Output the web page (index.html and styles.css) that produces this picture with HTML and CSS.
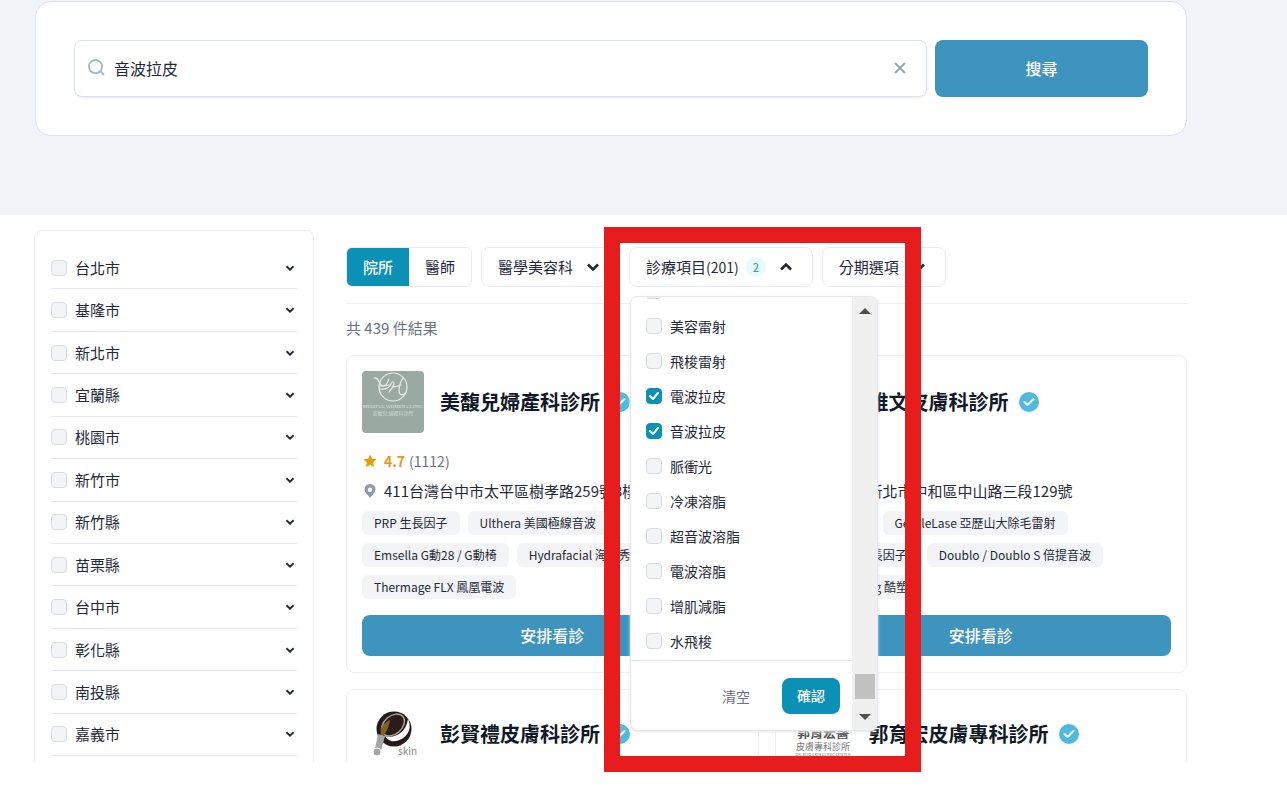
FILE: index.html
```html
<!DOCTYPE html>
<html lang="zh-Hant">
<head>
<meta charset="utf-8">
<meta name="viewport" content="width=device-width, initial-scale=1">
<title>音波拉皮 - 院所搜尋</title>
<link rel="stylesheet" href="styles.css">
</head>
<body>
<svg class="sprite" aria-hidden="true">
  <symbol id="chevron" viewBox="0 0 20 20"><path d="M5 7.5l5 5 5-5" fill="none" stroke="currentColor" stroke-width="2.6"/></symbol>
  <symbol id="verified" viewBox="0 0 20 20"><circle cx="10" cy="10" r="10" fill="#4fb9de"/><path d="M5.5 10l3 3 6-6" fill="none" stroke="#fff" stroke-width="2" stroke-linecap="round" stroke-linejoin="round"/></symbol>
  <symbol id="pin" viewBox="0 0 12 14"><path fill="#9099a8" fill-rule="evenodd" d="M6 0a5.5 5.5 0 0 0-5.5 5.5c0 2.700 2.400 4.500 4 6.500L6 14l1.500-2c1.600-2 4-3.800 4-6.500A5.500 5.500 0 0 0 6 0zm0 3.500a2.200 2.200 0 1 1 0 4.400 2.200 2.200 0 0 1 0-4.400z"/></symbol>
</svg>

<div class="page">
  <header class="hero">
    <form class="search">
      <div class="search-box">
        <svg class="search-icon" viewBox="0 0 18 18" aria-hidden="true"><circle cx="8" cy="8" r="7" /><path d="M13 13l4 4"/></svg>
        <input class="search-input" type="text" value="音波拉皮" aria-label="搜尋關鍵字">
        <button class="clear" type="button" aria-label="清除"><svg viewBox="0 0 12 12" aria-hidden="true"><path d="M1 1l10 10M11 1L1 11"/></svg></button>
      </div>
      <button class="search-button" type="button">搜尋</button>
    </form>
  </header>

  <div class="content">
    <aside class="cities">
      <div class="city"><label><input class="check" type="checkbox">台北市</label><svg class="arrow"><use href="#chevron"/></svg></div>
      <div class="city"><label><input class="check" type="checkbox">基隆市</label><svg class="arrow"><use href="#chevron"/></svg></div>
      <div class="city"><label><input class="check" type="checkbox">新北市</label><svg class="arrow"><use href="#chevron"/></svg></div>
      <div class="city"><label><input class="check" type="checkbox">宜蘭縣</label><svg class="arrow"><use href="#chevron"/></svg></div>
      <div class="city"><label><input class="check" type="checkbox">桃園市</label><svg class="arrow"><use href="#chevron"/></svg></div>
      <div class="city"><label><input class="check" type="checkbox">新竹市</label><svg class="arrow"><use href="#chevron"/></svg></div>
      <div class="city"><label><input class="check" type="checkbox">新竹縣</label><svg class="arrow"><use href="#chevron"/></svg></div>
      <div class="city"><label><input class="check" type="checkbox">苗栗縣</label><svg class="arrow"><use href="#chevron"/></svg></div>
      <div class="city"><label><input class="check" type="checkbox">台中市</label><svg class="arrow"><use href="#chevron"/></svg></div>
      <div class="city"><label><input class="check" type="checkbox">彰化縣</label><svg class="arrow"><use href="#chevron"/></svg></div>
      <div class="city"><label><input class="check" type="checkbox">南投縣</label><svg class="arrow"><use href="#chevron"/></svg></div>
      <div class="city"><label><input class="check" type="checkbox">嘉義市</label><svg class="arrow"><use href="#chevron"/></svg></div>
    </aside>

    <main class="results">
      <div class="filters">
        <div class="tabs">
          <button class="tab tab-active" type="button">院所</button>
          <button class="tab" type="button">醫師</button>
        </div>
        <button class="filter" type="button">醫學美容科<svg class="caret"><use href="#chevron"/></svg></button>
        <div class="filter-group">
          <button class="filter" type="button" aria-expanded="true"><span>診療項目<span class="total">(201)</span></span><span class="picked">2</span><svg class="caret caret-up"><use href="#chevron"/></svg></button>
          <div class="menu">
            <div class="menu-body">
              <div class="options">
                <label class="option"><input class="check" type="checkbox" aria-label="雷射"></label>
                <label class="option"><input class="check" type="checkbox">美容雷射</label>
                <label class="option"><input class="check" type="checkbox">飛梭雷射</label>
                <label class="option"><input class="check" type="checkbox" checked>電波拉皮</label>
                <label class="option"><input class="check" type="checkbox" checked>音波拉皮</label>
                <label class="option"><input class="check" type="checkbox">脈衝光</label>
                <label class="option"><input class="check" type="checkbox">冷凍溶脂</label>
                <label class="option"><input class="check" type="checkbox">超音波溶脂</label>
                <label class="option"><input class="check" type="checkbox">電波溶脂</label>
                <label class="option"><input class="check" type="checkbox">增肌減脂</label>
                <label class="option"><input class="check" type="checkbox">水飛梭</label>
              </div>
              <div class="menu-actions">
                <button class="reset" type="button">清空</button>
                <button class="confirm" type="button">確認</button>
              </div>
            </div>
            <div class="scrollbar" aria-hidden="true">
              <svg class="scroll-arrow" viewBox="0 0 12 6"><path d="M0 6l6-6 6 6z"/></svg>
              <span class="thumb"></span>
              <svg class="scroll-arrow" viewBox="0 0 12 6"><path d="M0 0l6 6 6-6z"/></svg>
            </div>
          </div>
        </div>
        <button class="filter" type="button">分期選項<svg class="caret"><use href="#chevron"/></svg></button>
      </div>

      <p class="count">共 439 件結果</p>

      <div class="cards">
        <article class="card">
          <div class="card-head">
            <svg class="logo" viewBox="0 0 62 62" role="img" aria-label="美馥兒婦產科診所">
              <rect width="62" height="62" rx="4" fill="#9aaaa3"/>
              <g fill="none" stroke="#e6ece9" stroke-width="1.200" stroke-linecap="round">
                <circle cx="31" cy="16" r="14"/>
                <path d="M12 7c4-1 4 3 7 7 3 3 6 0 8-6M17 15c4-1 7 0 10-1M18 18c6 1 9-1 11-5 1-3 3-3 3 0-1 4-3 6-5 8M30 16c4 0 6-1 9-2M41 7c-3 4-4 9-4 13 0 4 4 5 6 2"/>
              </g>
              <text x="31" y="37" font-size="5" text-anchor="middle" fill="#dbe3df" class="logo-serif">MEDIFUL WOMEN CLINIC</text>
              <text x="31" y="44" font-size="5" text-anchor="middle" fill="#d0d9d5">美馥兒 婦產科診所</text>
            </svg>
            <h2>美馥兒婦產科診所</h2><svg class="badge"><use href="#verified"/></svg>
          </div>
          <p class="rating"><svg class="star" viewBox="0 0 14 14" aria-hidden="true"><path d="M7 .5l2 4.200 4.600.600-3.400 3.200.900 4.600L7 10.900l-4.100 2.200.9-4.600L.4 5.300 5 4.700z"/></svg><b>4.7</b><span>(1112)</span></p>
          <p class="address"><svg class="pin"><use href="#pin"/></svg>411台灣台中市太平區樹孝路259號3樓</p>
          <ul class="tags">
            <li>PRP 生長因子</li><li>Ulthera 美國極線音波</li>
            <li>Emsella G動28 / G動椅</li><li>Hydrafacial 海菲秀</li>
            <li>Thermage FLX 鳳凰電波</li>
          </ul>
          <button class="book" type="button">安排看診</button>
        </article>

        <article class="card">
          <div class="card-head">
            <svg class="logo" viewBox="0 0 62 62" aria-hidden="true"></svg>
            <h2>雅文皮膚科診所</h2><svg class="badge"><use href="#verified"/></svg>
          </div>
          <p class="rating"></p>
          <p class="address"><svg class="pin"><use href="#pin"/></svg>235台灣新北市中和區中山路三段129號</p>
          <ul class="tags">
            <li>超皮秒雷射</li><li>GentleLase 亞歷山大除毛雷射</li>
            <li>PRP+ 自體生長因子</li><li>Doublo / Doublo S 倍提音波</li>
            <li>CoolSculpting 酷塑</li>
          </ul>
          <button class="book" type="button">安排看診</button>
        </article>

        <article class="card">
          <div class="card-head">
            <svg class="logo" viewBox="0 0 62 62" role="img" aria-label="彭賢禮皮膚科診所">
              <circle cx="32" cy="26" r="17.500" fill="#231a19"/>
              <path d="M46 16c6 12-5 24-17 22-3-1-5-3-6-5 9 3 21-3 23-17z" fill="#fff"/>
              <ellipse cx="31" cy="22" rx="13" ry="9" transform="rotate(-42 31 22)" fill="#2a1c19" stroke="#a5a5a5" stroke-width="1.500"/>
              <path d="M21 22c3-3 5-4 7-5-1 7-4 13-8 17-2-3-2-8 1-12z" fill="#86601c"/>
              <path d="M16 31l7 2-5 18h-6z" fill="#a5a5a5"/>
              <circle cx="15" cy="49" r="4" fill="#a5a5a5" stroke="#fff"/>
              <text x="36" y="52" font-size="10" fill="#888">skin</text>
            </svg>
            <h2>彭賢禮皮膚科診所</h2><svg class="badge"><use href="#verified"/></svg>
          </div>
        </article>

        <article class="card">
          <div class="card-head">
            <svg class="logo" viewBox="0 0 62 62" role="img" aria-label="郭育宏皮膚專科診所">
              <text x="32" y="34" font-size="13" font-weight="700" text-anchor="middle" fill="#555">郭育宏醫</text>
              <text x="32" y="47" font-size="9" text-anchor="middle" fill="#777">皮膚專科診所</text>
              <text x="32" y="53" font-size="4" text-anchor="middle" fill="#777">DR. KUO SKIN CLINIC CENTER</text>
            </svg>
            <h2>郭育宏皮膚專科診所</h2><svg class="badge"><use href="#verified"/></svg>
          </div>
        </article>
      </div>
    </main>
  </div>
</div>
<div class="highlight" aria-hidden="true"></div>
</body>
</html>
```

FILE: styles.css
```css
* { box-sizing: border-box; }

body {
  margin: 0;
  position: relative;
  min-height: 100vh;
  background: #fff;
  color: #1f2937;
  font-family: "Noto Sans CJK TC", "Noto Sans", sans-serif;
  font-size: 15px;
  line-height: 24px;
}

button, input { font: inherit; color: inherit; margin: 0; }
button { border: 0; padding: 0; background: none; cursor: pointer; }
h2, p, ul { margin: 0; padding: 0; }
svg { flex: none; display: block; }
.sprite { position: absolute; width: 0; height: 0; }

.page {
  display: flex;
  flex-direction: column;
  height: calc(100vh - 30px);
  overflow: hidden;
}

/* Search header */
.hero {
  flex: none;
  padding: 1px 100px 79px 35px;
  background: #f0f4f9;
}
.search {
  display: grid;
  grid-template-columns: 4fr 1fr;
  gap: 8px;
  padding: 38px;
  border: 1px solid #d9e1ec;
  border-radius: 16px;
  background: #fff;
}
.search-box {
  display: flex;
  align-items: center;
  gap: 9px;
  padding: 0 20px 2px 13px;
  border: 1px solid #d9e1ec;
  border-radius: 8px;
  box-shadow: 0 1px 2px #e5eaf1;
}
.search-icon { width: 17px; height: 17px; fill: none; stroke: #aab7cb; stroke-width: 2; }
.search-input {
  flex: 1;
  min-width: 0;
  padding: 0;
  border: 0;
  outline: 0;
  background: none;
  font-size: 16px;
}
.clear svg { width: 12px; height: 12px; fill: none; stroke: #94a3b8; stroke-width: 2; }
.search-button {
  padding: 16px 0 17px;
  border-radius: 8px;
  background: #3c94bf;
  color: #fff;
  font-size: 16px;
  font-weight: 500;
}

/* Page columns */
.content {
  flex: 1;
  min-height: 0;
  display: grid;
  grid-template-columns: 280px 1fr;
  gap: 32px;
  padding: 15px 100px 0 34px;
}

.cities {
  display: flex;
  flex-direction: column;
  min-height: 0;
  padding: 16px 16px 6px;
  border: 1px solid #eceef2;
  border-bottom: 0;
  border-radius: 8px 8px 0 0;
}
.city {
  flex: 1;
  display: flex;
  align-items: center;
  justify-content: space-between;
  border-bottom: 1px solid #e5e7eb;
}
.city label { display: flex; align-items: center; gap: 8px; }
.arrow { width: 14px; height: 14px; }

.check {
  appearance: none;
  flex: none;
  width: 16px;
  height: 16px;
  border: 1px solid #d8dbe1;
  border-radius: 4px;
  background: #f3f4f6;
}
.check:checked {
  border-color: #0a91b5;
  background: #0a91b5 url("data:image/svg+xml,%3Csvg xmlns='http://www.w3.org/2000/svg' viewBox='0 0 14 14'%3E%3Cpath d='M3 7l3 3 5-6' fill='none' stroke='white' stroke-width='2' stroke-linecap='round' stroke-linejoin='round'/%3E%3C/svg%3E") center / 14px no-repeat;
}

/* Filters */
.results { min-width: 0; min-height: 0; padding-top: 17px; }
.filters {
  display: flex;
  gap: 9px;
  padding-bottom: 16px;
  border-bottom: 1px solid #eceef2;
}
.tabs {
  display: flex;
  overflow: hidden;
  border: 1px solid #e9ebef;
  border-radius: 6px;
}
.tab { padding: 0 16px; }
.tab-active { background: #0a91b5; color: #fff; font-weight: 500; }
.filter-group { position: relative; }
.filter {
  display: flex;
  align-items: center;
  gap: 10px;
  height: 40px;
  padding: 0 16px;
  border: 1px solid #e9ebef;
  border-radius: 8px;
  background: #fff;
}
.total { font-size: 14px; }
.picked {
  width: 20px;
  margin-left: -3px;
  border-radius: 10px;
  background: #e5fbff;
  color: #3d9fbd;
  font-size: 11px;
  font-weight: 500;
  line-height: 20px;
  text-align: center;
}
.caret { width: 20px; height: 20px; }
.caret-up { transform: rotate(180deg); }

.menu {
  position: absolute;
  z-index: 1;
  top: 49px;
  left: 1px;
  display: flex;
  width: 248px;
  overflow: hidden;
  border: 1px solid #e5e7eb;
  border-radius: 8px;
  background: #fff;
  box-shadow: 0 1px 3px #e5e7eb;
}
.menu-body { flex: 1; }
.options {
  display: flex;
  flex-direction: column;
  justify-content: flex-end;
  height: 363px;
  padding: 0 15px 2px;
  overflow: hidden;
}
.option {
  flex: none;
  display: flex;
  align-items: center;
  gap: 8px;
  height: 35px;
  font-size: 14px;
}
.menu-actions {
  display: flex;
  align-items: center;
  justify-content: flex-end;
  gap: 32px;
  padding: 17px 12px 16px;
  border-top: 1px solid #e5e7eb;
  font-size: 14px;
}
.reset { color: #6b7280; }
.confirm {
  padding: 5px 15px 7px;
  border-radius: 8px;
  background: #0a91b5;
  color: #fff;
  font-weight: 500;
}
.scrollbar {
  display: flex;
  flex-direction: column;
  align-items: center;
  width: 25px;
  padding: 11px 0 10px;
  background: #f0f0f0;
}
.scroll-arrow { width: 12px; height: 6px; fill: #505050; }
.thumb { width: 20px; height: 25px; margin: auto 0 15px; background: #c1c1c1; }

.count { padding: 12px 0 15px; color: #6b7280; }

/* Clinic cards */
.cards {
  display: grid;
  grid-template-columns: repeat(2, minmax(0, 1fr));
  gap: 16px;
}
.card {
  padding: 15px 15px 16px;
  border: 1px solid #eceef2;
  border-radius: 8px;
}
.card-head { display: flex; align-items: center; gap: 16px; }
.card h2 { color: #111827; font-size: 20px; font-weight: 700; line-height: 28px; }
.card:nth-child(n+3) { padding-top: 13px; }
.logo { width: 62px; height: 62px; }
.logo-serif { font-family: "Liberation Serif", serif; }
.badge { width: 20px; height: 20px; margin-left: -6px; }
.rating {
  display: flex;
  align-items: center;
  gap: 4px;
  height: 24px;
  margin-top: 16px;
  color: #6b7280;
  font-size: 14px;
}
.rating b { color: #e39a26; }
.star { width: 14px; height: 14px; margin: 0 3px 0 1px; fill: #e3a008; }
.address {
  display: flex;
  align-items: center;
  gap: 8px;
  margin: 6px 0 8px;
  padding-left: 2px;
  white-space: nowrap;
}
.pin { width: 12px; height: 14px; }
.tags {
  display: flex;
  flex-wrap: wrap;
  gap: 8px;
  list-style: none;
}
.tags li {
  padding: 0 12px;
  border-radius: 6px;
  background: #f3f4f6;
  font-size: 12px;
  line-height: 24px;
}
.book {
  width: 100%;
  margin-top: 16px;
  padding: 8px 0 9px;
  border-radius: 8px;
  background: #3c94bf;
  color: #fff;
  font-size: 16px;
  font-weight: 500;
}

/* Annotation frame laid over the page */
.highlight {
  position: absolute;
  z-index: 2;
  top: 227px;
  left: 604px;
  width: 317px;
  height: 545px;
  border: 16px solid #e71d1d;
  pointer-events: none;
}
```
